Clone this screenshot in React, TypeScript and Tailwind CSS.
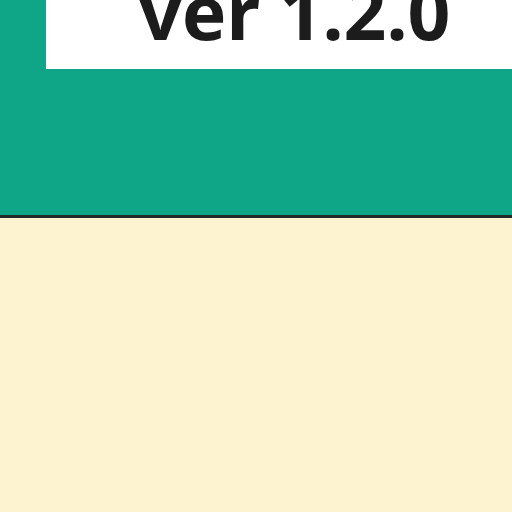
export default function App() {
  return (
    <div className="min-h-[512px] w-[512px] bg-[#fef3d0] overflow-hidden">
      <div className="h-[218px] bg-[#0fa687] border-b-[3px] border-[#1e2b27] overflow-hidden">
        <div className="ml-[46px] h-[69px] bg-white overflow-hidden pl-[93px]">
          <div
            className="-mt-[26px] text-[75px] leading-none font-bold text-[#1c1c1c] whitespace-nowrap"
            style={{ fontFamily: '"Noto Sans", sans-serif' }}
          >
            ver 1.2.0
          </div>
        </div>
      </div>
    </div>
  );
}
